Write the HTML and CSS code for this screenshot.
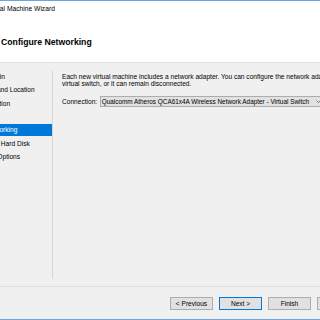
FILE: index.html
```html
<!DOCTYPE html>
<html lang="en">
<head>
  <meta charset="UTF-8" />
  <meta name="viewport" content="width=device-width, initial-scale=1" />
  <title>New Virtual Machine Wizard</title>
  <link rel="stylesheet" href="styles.css">
</head>
<body>
  <div class="window">
    <div class="titlebar">
      <span class="title">New Virtual Machine Wizard</span>
    </div>

    <div class="header">
      <h1>Configure Networking</h1>
    </div>

    <div class="main">
      <ul class="steps">
        <li>Before You Begin</li>
        <li>Specify Name and Location</li>
        <li>Specify Generation</li>
        <li>Assign Memory</li>
        <li class="active">Configure Networking</li>
        <li>Connect Virtual Hard Disk</li>
        <li class="wide">Installation Options</li>
        <li>Summary</li>
      </ul>

      <div class="content">
        <p>Each new virtual machine includes a network adapter. You can configure the network adapter to use a<br>virtual switch, or it can remain disconnected.</p>
        <div class="field">
          <label for="connection">Connection:</label>
          <div class="select" id="connection">
            <span>Qualcomm Atheros QCA61x4A Wireless Network Adapter - Virtual Switch</span>
            <svg width="5" height="3" viewBox="0 0 5 3"><path d="M0.5 0.5 L2.5 2.5 L4.5 0.5" fill="none" stroke="#606060" stroke-width="0.8"/></svg>
          </div>
        </div>
      </div>
    </div>

    <div class="footer">
      <button type="button">&lt; Previous</button>
      <button type="button" class="default">Next &gt;</button>
      <button type="button">Finish</button>
      <button type="button">Cancel</button>
    </div>
  </div>
</body>
</html>
```

FILE: styles.css
```css
body {
  margin: 0;
  width: 320px;
  height: 320px;
  overflow: hidden;
  background: #f0f0f0;
  font-family: "Segoe UI", "Liberation Sans", Arial, sans-serif;
  font-size: 6.6px;
  color: #000;
}
.window {
  margin-left: -48px;
  width: 418px;
  height: 320px;
  box-sizing: border-box;
  border-top: 1px solid #6ba5dd;
  border-bottom: 1px solid #6ba5dd;
  display: flex;
  flex-direction: column;
  background: #f0f0f0;
}
.titlebar {
  height: 20px;
  box-sizing: border-box;
  padding: 2.7px 0 0 19px;
  background: #fff;
  font-size: 6.7px;
  line-height: 10px;
  white-space: nowrap;
}
.header {
  height: 42px;
  box-sizing: border-box;
  padding: 14.7px 0 0 49px;
  background: #fff;
  border-bottom: 1px solid #e3e3e3;
}
.header h1 {
  margin: 0;
  font-size: 8.7px;
  line-height: 12px;
  font-weight: bold;
}
.main {
  flex: 1;
  display: flex;
  padding: 8px 0 7px;
}
.steps {
  list-style: none;
  margin: 0;
  padding: 0;
  width: 100px;
  border-right: 1px solid #d6d6d6;
  display: flex;
  flex-direction: column;
  gap: 2px;
}
.steps li {
  height: 11.33px;
  line-height: 11.33px;
  padding-left: 2px;
  white-space: nowrap;
}
.steps li.wide {
  padding-left: 12px;
}
.steps li.active {
  background: #0078d7;
  color: #fff;
}
.content {
  flex: 1;
  padding: 1.5px 0 0 9px;
  white-space: nowrap;
}
.content p {
  margin: 0;
  line-height: 7.8px;
}
.field {
  display: flex;
  align-items: center;
  margin-top: 7.5px;
}
.select {
  margin-left: 2.3px;
  width: 225px;
  height: 11.5px;
  box-sizing: border-box;
  padding: 0 3px 0 1.2px;
  border: 1px solid #adadad;
  background: #e1e1e1;
  display: flex;
  align-items: center;
  justify-content: space-between;
  font-size: 6.4px;
}
.footer {
  height: 33px;
  box-sizing: border-box;
  padding: 9.5px 10px 0 0;
  border-top: 1px solid #dfdfdf;
  display: flex;
  justify-content: flex-end;
  align-items: flex-start;
  gap: 6px;
}
button {
  width: 43px;
  height: 13px;
  padding: 0;
  font-family: inherit;
  font-size: 6.6px;
  color: #000;
  background: #e1e1e1;
  border: 1px solid #adadad;
}
button.default {
  border-color: #0078d7;
}
```
